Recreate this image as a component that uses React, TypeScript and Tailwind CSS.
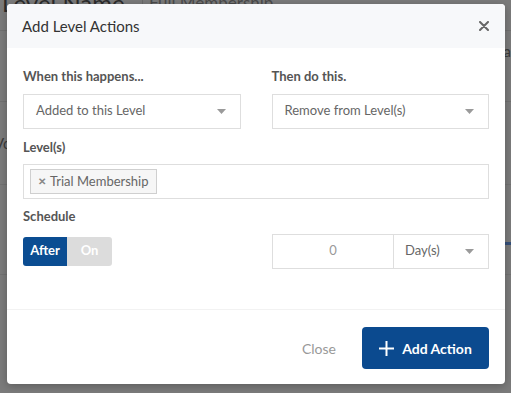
import React from "react";

function Caret() {
  return (
    <svg width="9" height="5" viewBox="0 0 9 5" className="shrink-0">
      <path d="M0 0h9L4.5 5z" fill="#9a9a9a" />
    </svg>
  );
}

function Select({ value }: { value: string }) {
  return (
    <div className="flex h-[35px] items-center justify-between border border-[#dedede] bg-white pl-[12px] pr-[14px] text-[13px] text-[#666]">
      <span>{value}</span>
      <Caret />
    </div>
  );
}

function Backdrop() {
  return (
    <div className="h-full w-full bg-[#7b7b7b] text-[#2c2c2c]">
      <div className="flex h-[31px] items-start border-b border-[#707070]">
        <div className="-mt-[12px] w-[143px] border-r border-[#6a6a6a] pl-[2px] text-[24px] leading-[30px]">
          Level Name
        </div>
        <div className="-mt-[9px] pl-[6px] text-[17px] leading-[24px] text-[#4a4a4a]">
          Full Membership
        </div>
        <div className="ml-auto pt-[40px] text-[15px] text-[#3a3a3a]">na</div>
      </div>
      <div className="h-[71px] border-b border-[#707070]" />
      <div className="flex h-[83px] items-center border-b border-[#727272] text-[15px] text-[#3a3a3a]">
        <span className="-ml-[6px]">Vc</span>
      </div>
      <div className="h-[57px]" />
      <div className="ml-auto h-[3px] w-[80px] bg-[#35507a]" />
      <div className="h-[30px] border-b border-[#727272]" />
    </div>
  );
}

export default function App() {
  return (
    <div
      className="relative h-[393px] w-[511px] overflow-hidden"
      style={{ fontFamily: "Lato, 'Open Sans', sans-serif" }}
    >
      <Backdrop />
      <div className="absolute left-[7px] top-[4px] flex h-[380px] w-[498px] flex-col overflow-hidden rounded-[4px] bg-white shadow-[0_2px_8px_rgba(0,0,0,0.25)]">
        <div className="flex h-[44px] shrink-0 items-center justify-between bg-[#f7f8fa] pl-[15px] pr-[16px]">
          <span className="text-[15px] text-[#333]">Add Level Actions</span>
          <svg width="10" height="10" viewBox="0 0 10 10">
            <path d="M1 1l8 8M9 1l-8 8" stroke="#666" strokeWidth="2" strokeLinecap="round" />
          </svg>
        </div>

        <div className="flex flex-col px-[16px] pt-[19px]">
          <div className="grid grid-cols-2 gap-x-[31px]">
            <div>
              <div className="mb-[7px] text-[13px] font-bold text-[#555]">When this happens...</div>
              <Select value="Added to this Level" />
            </div>
            <div>
              <div className="mb-[7px] text-[13px] font-bold text-[#555]">Then do this.</div>
              <Select value="Remove from Level(s)" />
            </div>
          </div>

          <div className="mt-[9px] mb-[7px] text-[13px] font-bold text-[#555]">Level(s)</div>
          <div className="flex h-[35px] items-center border border-[#dedede] px-[6px]">
            <div className="flex h-[25px] items-center gap-[4px] border border-[#cfcfcf] bg-[#f6f6f6] px-[7px] text-[13px] text-[#666]">
              <span className="text-[10px] font-bold text-[#888]">✕</span>
              <span>Trial Membership</span>
            </div>
          </div>

          <div className="mt-[8px] text-[13px] font-bold text-[#555]">Schedule</div>
          <div className="mt-[7px] flex items-center justify-between">
            <div className="flex h-[29px] w-[89px] overflow-hidden rounded-[3px] text-[13px] font-bold text-white">
              <div className="flex w-[44px] items-center justify-center bg-[#0b4d92]">After</div>
              <div className="flex flex-1 items-center justify-center bg-[#dcdcdc]">On</div>
            </div>
            <div className="flex h-[35px] w-[217px]">
              <div className="flex w-[122px] items-center justify-center border border-[#dedede] text-[13px] text-[#999]">
                0
              </div>
              <div className="flex flex-1 items-center justify-between border border-l-0 border-[#dedede] pl-[11px] pr-[14px] text-[13px] text-[#666]">
                <span>Day(s)</span>
                <Caret />
              </div>
            </div>
          </div>
        </div>

        <div className="mt-auto flex h-[75px] items-center justify-end gap-[26px] border-t border-[#f2f2f2] pr-[16px] pt-[2px]">
          <span className="text-[14px] text-[#999]">Close</span>
          <div className="flex h-[42px] w-[127px] items-center justify-center gap-[8px] rounded-[4px] bg-[#0b4a8f] text-[14px] font-bold text-white">
            <svg width="15" height="15" viewBox="0 0 15 15">
              <path d="M7.5 0v15M0 7.5h15" stroke="white" strokeWidth="2" />
            </svg>
            <span>Add Action</span>
          </div>
        </div>
      </div>
    </div>
  );
}
